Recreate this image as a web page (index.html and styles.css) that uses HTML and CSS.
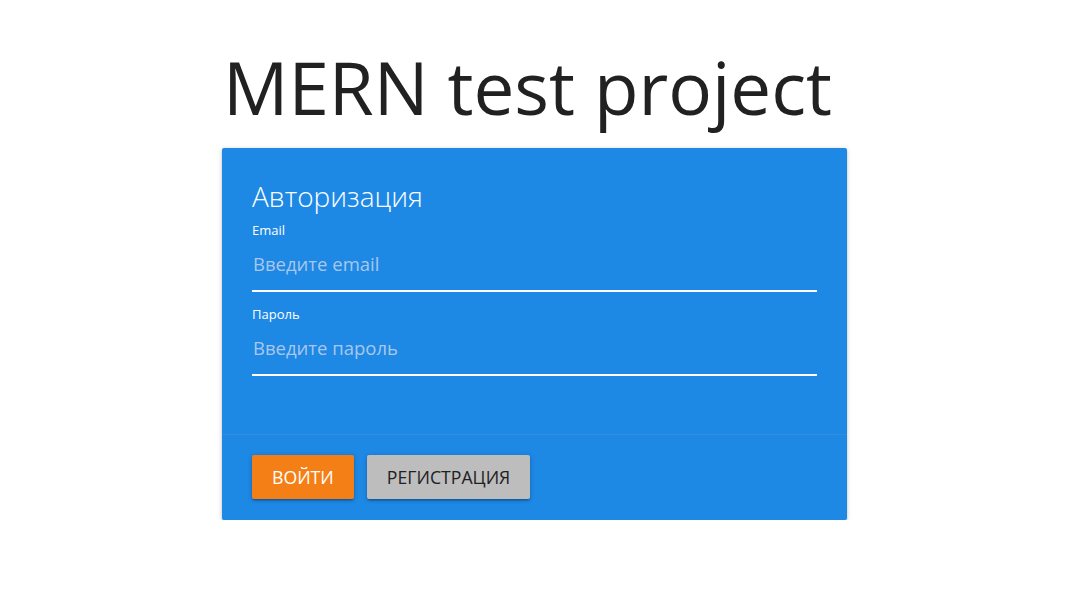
FILE: index.html
```html
<!DOCTYPE html>
<html lang="ru">
<head>
<meta charset="utf-8">
<title>MERN test project</title>
<link rel="stylesheet" href="styles.css">
</head>
<body>
<main class="page">
  <h1 class="title">MERN test project</h1>
  <div class="card">
    <div class="card-content">
      <span class="card-title">Авторизация</span>
      <div class="field">
        <label class="label" for="email">Email</label>
        <input class="input" id="email" type="text" placeholder="Введите email">
      </div>
      <div class="field">
        <label class="label" for="password">Пароль</label>
        <input class="input" id="password" type="password" placeholder="Введите пароль">
      </div>
    </div>
    <div class="card-action">
      <button class="btn btn-login">Войти</button>
      <button class="btn btn-register">Регистрация</button>
    </div>
  </div>
</main>
</body>
</html>
```

FILE: styles.css
```css
* { box-sizing: border-box; }
html, body { margin: 0; padding: 0; background: #fff; }
body { font-family: "Open Sans", "Noto Sans", sans-serif; color: #212121; }

.page {
  display: flex;
  flex-direction: column;
  align-items: center;
  padding-top: 33px;
}

.title {
  margin: 0 0 0 -15px;
  font-size: 72.8px;
  font-weight: 400;
  line-height: 107px;
  color: #212121;
  letter-spacing: 0;
}

.card {
  width: 625px;
  margin: 8px 0 0 -1px;
  background: #1e88e5;
  border-radius: 2px;
  box-shadow: 0 2px 2px 0 rgba(0,0,0,.14), 0 3px 1px -2px rgba(0,0,0,.12), 0 1px 5px 0 rgba(0,0,0,.2);
  color: #fff;
}

.card-content {
  padding: 30px 30px 58px 30px;
}

.card-title {
  display: block;
  font-size: 28px;
  font-weight: 300;
  line-height: 36px;
  margin-bottom: 8px;
  color: #fff;
}

.field { display: flex; flex-direction: column; }
.field + .field { margin-top: 14px; }

.label {
  font-size: 13px;
  line-height: 16px;
  color: #fff;
}

.input {
  height: 54px;
  width: 100%;
  border: 0;
  border-bottom: 2px solid #fff;
  background: transparent;
  outline: none;
  padding: 0 0 2px 1px;
  font-family: inherit;
  font-size: 18.5px;
  color: #fff;
}
.input::placeholder { color: #a9c7ec; opacity: 1; }

.card-action {
  border-top: 1px solid rgba(160,160,160,0.2);
  padding: 20px 30px 21px 30px;
  display: flex;
  gap: 13px;
}

.btn {
  height: 44px;
  border: 0;
  border-radius: 2px;
  padding: 0 20px;
  font-family: inherit;
  font-size: 17.7px;
  text-transform: uppercase;
  box-shadow: 0 2px 2px 0 rgba(0,0,0,.14), 0 3px 1px -2px rgba(0,0,0,.12), 0 1px 5px 0 rgba(0,0,0,.2);
  cursor: pointer;
}
.btn-login { background: #f57f17; color: #fff; }
.btn-register { background: #bdbdbd; color: #212121; }
```
